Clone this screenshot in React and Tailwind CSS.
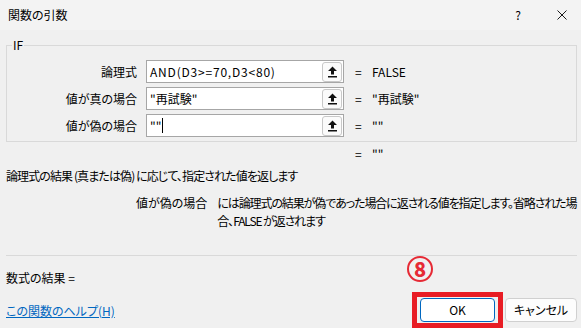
import React from 'react';

const RefButton = () => (
  <div className="w-[20px] h-[20px] shrink-0 rounded-[3px] border border-[#c8c8c8] bg-[#fbfbfb] flex items-center justify-center">
    <svg width="9" height="12" viewBox="0 0 9 12">
      <polygon points="4.5,0.5 9,5 6,5 6,8.5 3,8.5 3,5 0,5" fill="#111" />
      <rect x="0" y="10" width="9" height="1.5" fill="#111" />
    </svg>
  </div>
);

const ArgRow = ({ label, value, result, caret, wide }) => (
  <div className="flex items-center h-[23px]">
    <div className="w-[130px] text-right whitespace-nowrap">{label}</div>
    <div className="ml-[9px] w-[198px] h-full border border-[#a6a6a6] bg-white flex items-center pl-[3px] pr-px">
      <span className={wide ? 'flex-1 flex items-center whitespace-nowrap tracking-[0.8px]' : 'flex-1 flex items-center whitespace-nowrap'}>
        {value}
        {caret && <span className="ml-px w-px h-[15px] bg-black" />}
      </span>
      <RefButton />
    </div>
    <span className="ml-[11px] w-[17px]">=</span>
    <span className="whitespace-nowrap">{result}</span>
  </div>
);

const App = () => {
  return (
    <div className="w-[581px] h-[328px] overflow-hidden bg-[#f0f0f0] text-[12px] leading-[16px] text-black font-['Noto_Sans_CJK_JP',sans-serif] [font-feature-settings:'palt']">
      {/* title bar */}
      <div className="h-[30px] bg-[#f3f3f3] flex items-center pl-[8px]">
        <span>関数の引数</span>
        <span className="ml-auto">?</span>
        <svg className="ml-[36px] mr-[14px]" width="10" height="10" viewBox="0 0 10 10">
          <path d="M0.5 0.5 L9.5 9.5 M9.5 0.5 L0.5 9.5" stroke="#1a1a1a" strokeWidth="1" />
        </svg>
      </div>

      <div className="pl-[6px] pr-[4px]">
        {/* IF group */}
        <div className="relative mt-[15px] border border-[#d9d9d9] pt-[14px] pb-[4px] flex flex-col gap-[4px]">
          <span className="absolute -top-[9px] left-[5px] px-px bg-[#f0f0f0]">IF</span>
          <ArgRow label="論理式" value="AND(D3>=70,D3<80)" result="FALSE" wide />
          <ArgRow label="値が真の場合" value={'"再試験"'} result={'"再試験"'} />
          <ArgRow label="値が偽の場合" value={'""'} result={'""'} caret />
        </div>

        <div className="flex items-center h-[16px] mt-[4px]">
          <div className="w-[338px]" />
          <span className="ml-[11px] w-[17px]">=</span>
          <span>""</span>
        </div>

        <div className="mt-[6px] h-[16px] whitespace-nowrap tracking-[-0.9px]">
          論理式の結果 (真または偽) に応じて、指定された値を返します
        </div>

        <div className="mt-[10px] flex leading-[18px] pl-[130px]">
          <span className="whitespace-nowrap">値が偽の場合</span>
          <span className="ml-[10px] whitespace-nowrap tracking-[-1.1px]">
            には論理式の結果が偽であった場合に返される値を指定します。省略された場
            <br />
            合、FALSE が返されます
          </span>
        </div>

        <div className="mt-[25px] h-px bg-[#d9d9d9]" />

        <div className="flex justify-between items-start">
          <div className="flex flex-col">
            <div className="mt-[14px] h-[16px]">数式の結果 =</div>
            <a href="#" className="mt-[17px] h-[16px] text-[#0067c0] underline">
              この関数のヘルプ(H)
            </a>
          </div>
          <div className="flex flex-col items-start">
            <div className="-ml-[5px] w-[26px] h-[26px] rounded-full border-[2.5px] border-[#e62a35] flex items-center justify-center text-[#e62a35] text-[20px] font-extrabold leading-none">
              8
            </div>
            <div className="mt-[10px] flex items-start">
              <div className="w-[91px] h-[36px] border-[5px] border-[#e81c24] flex items-center justify-center">
                <button className="w-[75px] h-[24px] rounded-[4px] border border-[#0067c0] bg-white">OK</button>
              </div>
              <button className="ml-[2px] mt-[6px] w-[72px] h-[24px] rounded-[4px] border border-[#d0d0d0] bg-[#fdfdfd]">
                キャンセル
              </button>
            </div>
          </div>
        </div>
      </div>
    </div>
  );
};

export default App;
